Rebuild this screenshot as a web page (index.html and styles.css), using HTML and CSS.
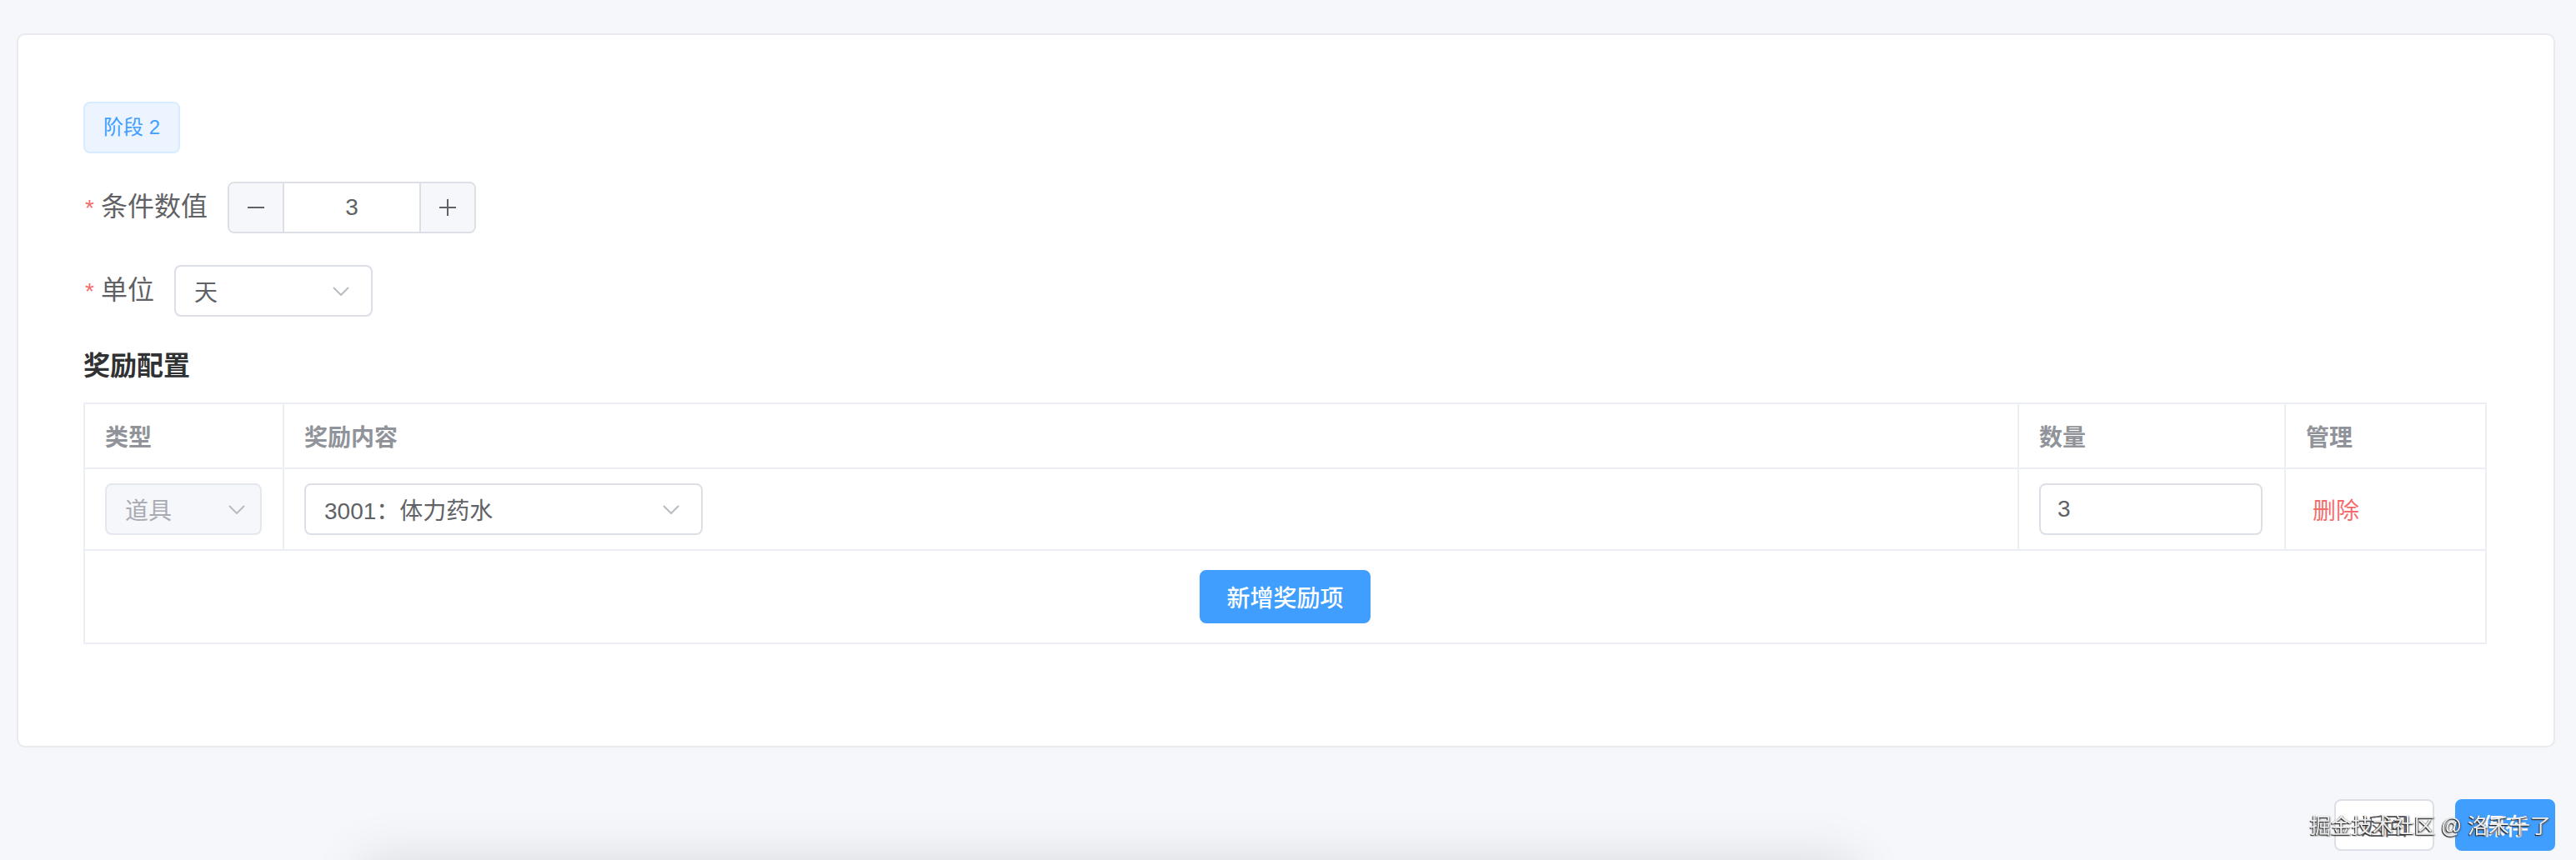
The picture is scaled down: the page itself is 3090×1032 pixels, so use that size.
FILE: index.html
```html
<!DOCTYPE html>
<html lang="zh-CN">
<head>
    <meta charset="UTF-8">
    <meta name="viewport" content="width=device-width, initial-scale=1.0">
    <title>阶段奖励配置</title>
    <link rel="stylesheet" href="styles.css">
</head>
<body>
    <div class="page">
        <div class="card">
            <div class="stage-tag">阶段 2</div>

            <div class="form-item">
                <label class="form-label is-required">条件数值</label>
                <div class="input-number">
                    <span class="num-btn num-minus">
                        <svg width="22" height="22" viewBox="0 0 22 22"><path d="M1 11h20" /></svg>
                    </span>
                    <input class="num-input" type="text" value="3">
                    <span class="num-btn num-plus">
                        <svg width="22" height="22" viewBox="0 0 22 22"><path d="M1 11h20M11 1v20" /></svg>
                    </span>
                </div>
            </div>

            <div class="form-item">
                <label class="form-label is-required">单位</label>
                <div class="select unit-select">
                    <span class="select-value">天</span>
                    <svg class="select-arrow" width="20" height="11" viewBox="0 0 20 11"><path d="M1 1l9 9 9-9" /></svg>
                </div>
            </div>

            <h3 class="section-title">奖励配置</h3>

            <table class="reward-table">
                <colgroup>
                    <col class="col-type">
                    <col>
                    <col class="col-count">
                    <col class="col-action">
                </colgroup>
                <thead>
                    <tr>
                        <th>类型</th>
                        <th>奖励内容</th>
                        <th>数量</th>
                        <th>管理</th>
                    </tr>
                </thead>
                <tbody>
                    <tr class="reward-row">
                        <td>
                            <div class="select type-select is-disabled">
                                <span class="select-value">道具</span>
                                <svg class="select-arrow" width="20" height="11" viewBox="0 0 20 11"><path d="M1 1l9 9 9-9" /></svg>
                            </div>
                        </td>
                        <td>
                            <div class="select item-select">
                                <span class="select-value">3001：体力药水</span>
                                <svg class="select-arrow" width="20" height="11" viewBox="0 0 20 11"><path d="M1 1l9 9 9-9" /></svg>
                            </div>
                        </td>
                        <td>
                            <input class="text-input count-input" type="text" value="3">
                        </td>
                        <td>
                            <a class="link-danger" href="#">删除</a>
                        </td>
                    </tr>
                    <tr class="add-row">
                        <td colspan="4">
                            <button class="btn btn-primary btn-add">新增奖励项</button>
                        </td>
                    </tr>
                </tbody>
            </table>
        </div>

        <div class="footer-actions">
            <button class="btn">返回</button>
            <button class="btn btn-primary">保存</button>
        </div>
    </div>

    <div class="float-panel"></div>
    <div class="watermark">掘金技术社区 @ 洛禾千了</div>
</body>
</html>
```

FILE: styles.css
```css
* {
    box-sizing: border-box;
}

body {
    margin: 0;
    padding: 0;
    background-color: #f5f7fa;
    color: #606266;
    font-family: "Liberation Sans", "Noto Sans CJK SC", sans-serif;
    overflow: hidden;
}

.page {
    padding: 40px 25px 0 20px;
}

.card {
    background-color: #ffffff;
    border: 2px solid #e8eaef;
    border-radius: 10px;
    padding: 80px 80px 122px 78px;
}

/* stage badge */
.stage-tag {
    display: inline-block;
    height: 62px;
    line-height: 58px;
    padding: 0 22px;
    font-size: 24px;
    color: #409eff;
    background-color: #ecf5ff;
    border: 2px solid #d9ecff;
    border-radius: 8px;
    margin-bottom: 34px;
}

/* form rows */
.form-item {
    display: flex;
    align-items: center;
    height: 62px;
    margin-bottom: 38px;
}

.form-label {
    font-size: 32px;
    line-height: 62px;
    color: #606266;
    padding-right: 24px;
}

.form-label.is-required::before {
    content: "*";
    color: #f56c6c;
    font-size: 28px;
    margin-right: 8px;
    margin-left: 2px;
}

.input-number {
    display: flex;
    width: 298px;
    height: 62px;
    border: 2px solid #dcdfe6;
    border-radius: 8px;
    overflow: hidden;
}

.num-btn {
    width: 66px;
    display: flex;
    align-items: center;
    justify-content: center;
    background-color: #f5f7fa;
}

.num-btn svg {
    stroke: #606266;
    stroke-width: 2;
    fill: none;
}

.num-minus {
    border-right: 2px solid #dcdfe6;
}

.num-plus {
    border-left: 2px solid #dcdfe6;
}

.num-input {
    flex: 1;
    min-width: 0;
    border: none;
    outline: none;
    text-align: center;
    font-family: inherit;
    font-size: 28px;
    color: #606266;
    padding: 0;
}

/* select boxes */
.select {
    display: flex;
    align-items: center;
    justify-content: space-between;
    height: 62px;
    padding: 0 26px 0 22px;
    border: 2px solid #dcdfe6;
    border-radius: 8px;
    background-color: #ffffff;
    font-size: 28px;
    color: #606266;
}

.select-arrow {
    stroke: #b8bbc2;
    stroke-width: 2;
    fill: none;
    flex-shrink: 0;
}

.select.is-disabled {
    background-color: #f5f7fa;
    border-color: #e4e7ed;
    color: #a8abb2;
    padding-right: 18px;
}

.unit-select {
    width: 238px;
}

.type-select {
    width: 188px;
}

.item-select {
    width: 478px;
}

.section-title {
    margin: 0 0 23px;
    font-size: 32px;
    line-height: 42px;
    font-weight: bold;
    color: #303133;
}

/* reward table */
.reward-table {
    width: 100%;
    table-layout: fixed;
    border-collapse: collapse;
    border: 2px solid #ebeef5;
}

.col-type {
    width: 239px;
}

.col-count {
    width: 320px;
}

.col-action {
    width: 241px;
}

.reward-table th,
.reward-table td {
    border: 2px solid #ebeef5;
    padding: 0 24px;
    text-align: left;
    font-size: 28px;
}

.reward-table th {
    height: 78px;
    color: #909399;
    font-weight: bold;
}

.reward-row td {
    height: 98px;
}

.add-row td {
    height: 112px;
    text-align: center;
}

.text-input {
    display: block;
    height: 62px;
    border: 2px solid #dcdfe6;
    border-radius: 8px;
    padding: 0 20px;
    outline: none;
    font-family: inherit;
    font-size: 28px;
    color: #606266;
}

.count-input {
    width: 268px;
}

.link-danger {
    color: #f56c6c;
    text-decoration: none;
    margin-left: 8px;
}

/* buttons */
.btn {
    height: 62px;
    padding: 0 30px;
    font-family: inherit;
    font-size: 28px;
    color: #606266;
    background-color: #ffffff;
    border: 2px solid #dcdfe6;
    border-radius: 8px;
    cursor: pointer;
}

.btn-primary {
    color: #ffffff;
    background-color: #409eff;
    border-color: #409eff;
    font-weight: 500;
}

.btn-add {
    height: 64px;
}

.footer-actions {
    display: flex;
    justify-content: flex-end;
    gap: 25px;
    margin-top: 62px;
}

/* floating panel sitting just under the fold, only its shadow shows */
.float-panel {
    position: fixed;
    top: 100%;
    left: 434px;
    width: 1792px;
    height: 200px;
    background-color: #ffffff;
    box-shadow: 0 0 60px rgba(0, 0, 0, 0.12);
}

.watermark {
    position: fixed;
    right: 30px;
    bottom: 26px;
    font-size: 25px;
    line-height: 30px;
    color: #eeeeee;
    text-shadow: -1px 1px 1px #222222, 1px 1px 2px #555555;
    pointer-events: none;
}
```
